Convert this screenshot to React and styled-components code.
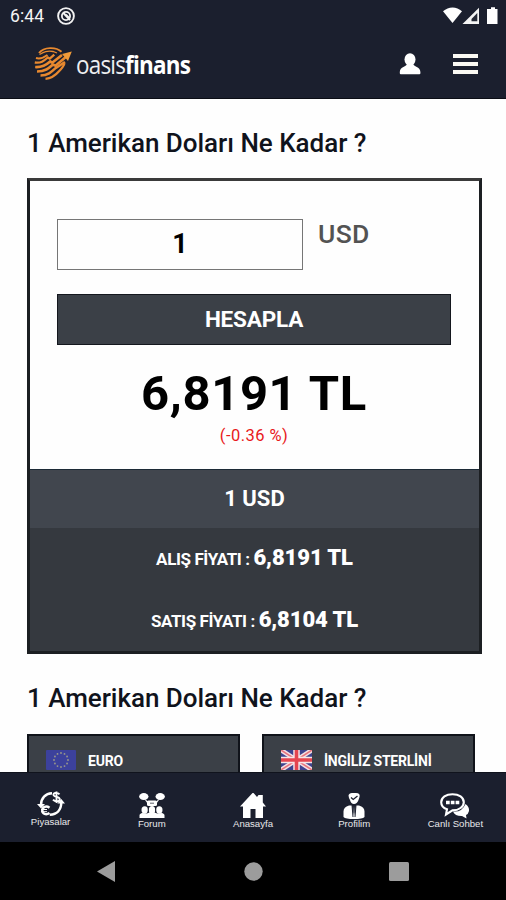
import styled, { createGlobalStyle } from "styled-components";

const colors = {
  navy: "#1b1f2e",
  slate: "#3b4047",
  row: "#41464e",
  rowDark: "#35393f",
  gray: "#9c9c9c",
};

const GlobalStyle = createGlobalStyle`
  * {
    box-sizing: border-box;
  }
  body {
    margin: 0;
    background: #fefefe;
    font-family: Roboto, "Liberation Sans", sans-serif;
  }
`;

const Phone = styled.div`
  display: flex;
  flex-direction: column;
  width: 506px;
  height: 900px;
  overflow: hidden;
`;

const StatusBar = styled.div`
  flex: none;
  display: flex;
  align-items: center;
  justify-content: space-between;
  height: 32px;
  padding: 0 6px 0 10px;
  background: ${colors.navy};
  color: #f4f4f4;
`;

const StatusGroup = styled.div`
  display: flex;
  align-items: center;
  gap: ${(props) => props.$gap};
`;

const Clock = styled.span`
  font-size: 17.5px;
  line-height: 32px;
  letter-spacing: 0.1px;
`;

const Header = styled.header`
  flex: none;
  display: flex;
  align-items: center;
  height: 67px;
  padding: 0 28px 2px 34px;
  background: ${colors.navy};
  border-bottom: 1px solid #0b0d15;
`;

const Logo = styled.div`
  display: flex;
  align-items: center;
  gap: 4px;
  margin-right: auto;
`;

const LogoText = styled.span`
  color: #eeeef0;
  font-family: "Open Sans", sans-serif;
  font-size: 25.5px;
  line-height: 34px;
  white-space: nowrap;
  width: 115px;
  transform: scaleX(0.88);
  transform-origin: left;
  letter-spacing: -0.9px;

  b {
    color: #fff;
    font-weight: 700;
  }
`;

const Menu = styled.button`
  display: flex;
  flex-direction: column;
  gap: 4px;
  width: 25px;
  margin-left: 32px;
  padding: 0;
  border: none;
  background: none;

  span {
    height: 4px;
    background: #fbf9f3;
  }
`;

const Content = styled.main`
  flex: 1 1 0;
  min-height: 0;
  overflow: hidden;
  padding: 28px 24px 0 27px;
`;

const Title = styled.h2`
  margin: 0;
  height: 32px;
  line-height: 32px;
  font-size: 26px;
  font-weight: 500;
  letter-spacing: -0.03px;
  color: #10131c;
  white-space: nowrap;
`;

const Card = styled.section`
  height: 476px;
  margin: 19px 0 28px;
  border: 3px solid #1c1f22;
  border-top-color: #3a3a3a;
`;

const Form = styled.div`
  height: 288px;
  padding: 38px 28px 0 27px;
  text-align: center;
`;

const InputRow = styled.div`
  display: flex;
  gap: 15px;
  margin-bottom: 24px;
`;

const AmountInput = styled.input`
  width: 246px;
  height: 51px;
  padding: 0 0 1px;
  border: 1px solid #767676;
  border-radius: 0;
  background: transparent;
  color: #000;
  font: 700 27px Roboto, sans-serif;
  text-align: center;
  outline: none;
`;

const Currency = styled.span`
  line-height: 29px;
  font-size: 26.5px;
  font-weight: 500;
  letter-spacing: 0.3px;
  color: #535353;
`;

const CalcButton = styled.button`
  display: block;
  width: 394px;
  height: 51px;
  padding: 0 0 1px;
  border: 1px solid #14171e;
  background: ${colors.slate};
  color: #fff;
  font: 700 22.5px Roboto, sans-serif;
  letter-spacing: -0.2px;
`;

const Price = styled.div`
  margin-top: 20px;
  line-height: 58px;
  font-size: 49px;
  font-weight: 700;
  letter-spacing: 0.6px;
  color: #000;
`;

const Change = styled.div`
  margin-top: 3px;
  line-height: 20px;
  font-size: 16.5px;
  letter-spacing: 0.45px;
  color: #e8191b;
`;

const RateHead = styled.div`
  height: 59px;
  border-top: 1px solid #1c2a36;
  background: ${colors.row};
  color: #fff;
  line-height: 58px;
  font-size: 22px;
  font-weight: 700;
  text-align: center;
`;

const Rates = styled.div`
  display: grid;
  grid-template-rows: 62px 1fr;
  height: 123px;
  background: ${colors.rowDark};
  color: #fff;
  text-align: center;
`;

const Rate = styled.div`
  line-height: 60px;
  font-size: 17px;
  font-weight: 700;
  letter-spacing: -0.4px;

  b {
    font-size: 22px;
    letter-spacing: -0.1px;
  }
`;

const Tiles = styled.div`
  display: flex;
  gap: 22px;
  margin-top: 20px;
`;

const Tile = styled.div`
  display: flex;
  gap: 12px;
  width: 213px;
  height: 70px;
  padding: 14px 0 0 17px;
  border: 2px solid #10131a;
  background: ${colors.slate};
  color: #fff;
  font-size: 14px;
  line-height: 22px;
  font-weight: 700;
  letter-spacing: -0.22px;
`;

const TabBar = styled.nav`
  flex: none;
  display: grid;
  grid-template-columns: repeat(5, 1fr);
  height: 70px;
  border-top: 1px solid #10131d;
  background: ${colors.navy};
`;

const Tab = styled.div`
  display: flex;
  flex-direction: column;
  align-items: center;
  padding-top: ${(props) => props.$top || "20px"};
  color: #e8e8ea;
  font-family: "Liberation Sans", Arial, sans-serif;
  font-size: 9.6px;
  line-height: 11px;

  svg {
    flex: none;
    margin-bottom: -1px;
  }
`;

const SystemBar = styled.div`
  flex: none;
  display: flex;
  justify-content: space-between;
  height: 58px;
  padding: 19px 97px 0;
  background: #000;
`;

const DndIcon = () => (
  <svg width="18" height="18" viewBox="0 0 18 18" fill="none" stroke="#f2f2f2">
    <circle cx="9" cy="9" r="7.9" strokeWidth="1.9" />
    <circle cx="9" cy="9" r="4.1" strokeWidth="1.8" />
    <path d="M6 5.5l7 7.5" strokeWidth="2" />
    <path d="M9 7.5l3 3" strokeWidth="1.6" />
  </svg>
);

const SignalIcons = () => (
  <svg width="57" height="18" viewBox="0 0 57 18">
    <path d="M0 4.2C5.6-.9 13.5-.9 19 4.2L9.500 16Z" fill="#fff" />
    <path d="M36 .8V17H19.500Z" fill="#f5f5f5" />
    <path d="M34.300 6v8.300h-5.800V12Z" fill="#252936" />
    <path d="M44.500 2h2V.3h4V2h2.500v15h-10.500V2Z" fill="#fff" transform="translate(1.500)" />
  </svg>
);

/* globe made of rising stripes, the longest one ends in an arrow head */
const LogoMark = () => (
  <svg width="38" height="34" viewBox="0 0 38 34" fill="none" stroke="#e8892f">
    <path d="M5 6C10-.3 22-.3 27.500 4.800" strokeWidth="1.900" />
    <path d="M5.500 7.500C10 5 13 3.500 19 4.500l4 1.500" strokeWidth="1.300" />
    <path d="M2 11c4.500 1.500 8-.5 11.500-3" strokeWidth="2" />
    <path d="M.8 15.500c6 1 9-1.500 13-5l2 1.200 4.500-4" strokeWidth="2.300" />
    <path d="M1.200 20c7 .5 11-2 15-5.500l2 1.200L28 8" strokeWidth="2.700" />
    <path d="M3 24.500c8 0 11.500-3 16-7l2.500 1.200L33 9" strokeWidth="2.700" />
    <path d="M6.500 28.500c7.500 0 11-3.500 15-7.300L31 15" strokeWidth="2.500" />
    <path d="M11.500 31.800c7-.5 10.500-4 13.500-7.500 2.500-2.500 4.500-4.500 5.500-8" strokeWidth="2.300" />
    <path d="M28 7L37.800 4.500 34 14Z" fill="#f09a38" stroke="none" />
  </svg>
);

const UserIcon = () => (
  <svg width="22" height="22" viewBox="0 0 22 22" fill="#fff">
    <ellipse cx="11" cy="6.500" rx="5.500" ry="6.300" />
    <path d="M8 11c0 2.500-7.200 2.500-7.200 8v1.200q0 1 1 1h18.600q1 0 1-1V19c0-5.500-7.200-5.500-7.200-8Z" />
  </svg>
);

const EuFlag = () => (
  <svg width="30" height="20" viewBox="0 0 30 20">
    <rect width="30" height="20" rx="1" fill="#3c419c" />
    {Array.from({ length: 12 }, (_, i) => (
      <circle
        key={i}
        cx={15 + 7 * Math.sin((i * Math.PI) / 6)}
        cy={10 - 7 * Math.cos((i * Math.PI) / 6)}
        r="0.9"
        fill="#9b9989"
      />
    ))}
  </svg>
);

const UkFlag = () => (
  <svg width="31" height="20" viewBox="0 0 31 20">
    <rect width="31" height="20" fill="#3d438f" />
    <path d="M0 0l31 20M31 0L0 20" stroke="#f3dfe3" strokeWidth="4.500" />
    <path d="M0 0l31 20M31 0L0 20" stroke="#e8737d" strokeWidth="1.500" />
    <path d="M15.500 0v20M0 10h31" stroke="#f7e6e8" strokeWidth="6.500" />
    <path d="M15.500 0v20M0 10h31" stroke="#e54550" strokeWidth="3.600" />
  </svg>
);

const MarketsIcon = () => (
  <svg width="28" height="26" viewBox="0 0 28 26" fill="none" stroke="#fff">
    <path d="M4 14C4 7 8.500 2.500 15 2.200M24.300 11c0 8-4.500 12.500-11.500 12.700" strokeWidth="2.500" />
    <path d="M0 13h8L4 17.500ZM20.300 12.500h7.700L24.300 8Z" fill="#fff" stroke="none" />
    <path d="M22.500 3.300c-2-2.300-6.300-1.700-6 .7.300 2.500 6.300 1.300 6.300 4.200 0 2.600-4.600 2.900-6.800.5M19.500.5v11.500" strokeWidth="1.900" />
    <path d="M12.500 16.800c-3.500-2.600-7.200-.6-7.200 2.700s3.700 5 7.200 2.500" strokeWidth="2.500" />
    <path d="M4 18.500h6M4 20.700h6" strokeWidth="1" />
  </svg>
);

const ForumIcon = () => (
  <svg width="26" height="26" viewBox="0 0 26 26" fill="#fff">
    <ellipse cx="4.800" cy="3.600" rx="4.700" ry="3.500" />
    <ellipse cx="21.200" cy="3.600" rx="4.700" ry="3.500" />
    <path d="M5 5.500l5.500 4-2 1ZM21 5.500l-5.500 4 2 1Z" />
    <rect x="8" y="7.500" width="10" height="5.500" rx="1.500" />
    <ellipse cx="5.700" cy="17" rx="3.200" ry="3.700" />
    <ellipse cx="13" cy="17" rx="3.200" ry="4" />
    <ellipse cx="20.300" cy="17" rx="3.200" ry="3.700" />
    <path d="M.5 25v-2.500q0-2 3-2.500l4.500.5 2-1h6l2 1 4.500-.5q3 .5 3 2.500V25Z" />
    <path d="M11 10.200h4M9.300 15v5M16.700 15v5" stroke={colors.navy} strokeWidth=".7" />
  </svg>
);

const HomeIcon = () => (
  <svg width="26" height="26" viewBox="0 0 26 26" fill="#fff">
    <path d="M12.500 0L0 13.500h3V25h7.500v-9h5v9H23V13.500h3L22.800 9.500V2h-4.300l-1.500 2L13.500 0Z" />
  </svg>
);

const ProfileIcon = () => (
  <svg width="22" height="26" viewBox="0 0 22 26" fill="#fff">
    <path d="M5.500 2.500Q6 0 9 0h4q4.500 0 3.500 4L15.500 7Q14 11 11 11T7 7L6 5Z" />
    <path d="M8 4.500l2.200 2L14.500 3" fill="none" stroke={colors.navy} strokeWidth="1.300" />
    <path d="M6 12.500h3l1.500 10 .5-10 .5 10 1.500-10h3q5.500 1.500 5.500 6V24q-2 2-10.500 2T.5 24v-5.500q0-4.500 5.500-6Z" />
    <path d="M9 12l1 12M13 12l-1 12" stroke={colors.navy} strokeWidth="1" />
  </svg>
);

const ChatIcon = () => (
  <svg width="30" height="26" viewBox="0 0 30 26">
    <path d="M25.500 11q4 3 3.500 7-.7 3-3 4l.5 3.500-4.500-2.500q-7 .2-9-4.500 9 1 12.500-7.500Z" fill="#fff" />
    <path d="M12.500 1.200c6.500 0 11.300 3.400 11.300 8s-4.800 8.200-11.300 8.200L6 21.500l1-5.200C3.300 15 1.200 12.500 1.200 9.200c0-4.600 4.800-8 11.300-8Z" fill={colors.navy} stroke="#fff" strokeWidth="2.100" />
    <path d="M6 7.700h3.700v3.500H6ZM10.800 7.700h3.700v3.500h-3.700ZM15.600 7.700h3.700v3.500h-3.700Z" fill="#fff" />
  </svg>
);

const tabs = [
  { label: "Piyasalar", icon: <MarketsIcon />, top: "18px" },
  { label: "Forum", icon: <ForumIcon /> },
  { label: "Anasayfa", icon: <HomeIcon /> },
  { label: "Profilim", icon: <ProfileIcon /> },
  { label: "Canlı Sohbet", icon: <ChatIcon /> },
];

export default function App() {
  return (
    <Phone>
      <GlobalStyle />
      <StatusBar>
        <StatusGroup $gap="13px">
          <Clock>6:44</Clock>
          <DndIcon />
        </StatusGroup>
        <SignalIcons />
      </StatusBar>
      <Header>
        <Logo>
          <LogoMark />
          <LogoText>
            oasis<b>finans</b>
          </LogoText>
        </Logo>
        <UserIcon />
        <Menu aria-label="Menü">
          <span />
          <span />
          <span />
        </Menu>
      </Header>

      <Content>
        <Title>1 Amerikan Doları Ne Kadar ?</Title>
        <Card>
          <Form>
            <InputRow>
              <AmountInput defaultValue="1" />
              <Currency>USD</Currency>
            </InputRow>
            <CalcButton>HESAPLA</CalcButton>
            <Price>6,8191 TL</Price>
            <Change>(-0.36 %)</Change>
          </Form>
          <RateHead>1 USD</RateHead>
          <Rates>
            <Rate>
              ALIŞ FİYATI : <b>6,8191 TL</b>
            </Rate>
            <Rate>
              SATIŞ FİYATI : <b>6,8104 TL</b>
            </Rate>
          </Rates>
        </Card>
        <Title>1 Amerikan Doları Ne Kadar ?</Title>
        <Tiles>
          <Tile>
            <EuFlag />
            EURO
          </Tile>
          <Tile>
            <UkFlag />
            İNGİLİZ STERLİNİ
          </Tile>
        </Tiles>
      </Content>

      <TabBar>
        {tabs.map((tab) => (
          <Tab key={tab.label} $top={tab.top}>
            {tab.icon}
            {tab.label}
          </Tab>
        ))}
      </TabBar>
      <SystemBar>
        <svg width="18" height="21" viewBox="0 0 18 21">
          <path d="M0 10.500L18 0v21Z" fill={colors.gray} />
        </svg>
        <svg width="21" height="21" viewBox="0 0 21 21">
          <circle cx="11.500" cy="10.500" r="9.200" fill={colors.gray} />
        </svg>
        <svg width="20" height="21" viewBox="0 0 20 21">
          <rect y="1" width="20" height="19" rx="1.500" fill={colors.gray} />
        </svg>
      </SystemBar>
    </Phone>
  );
}
